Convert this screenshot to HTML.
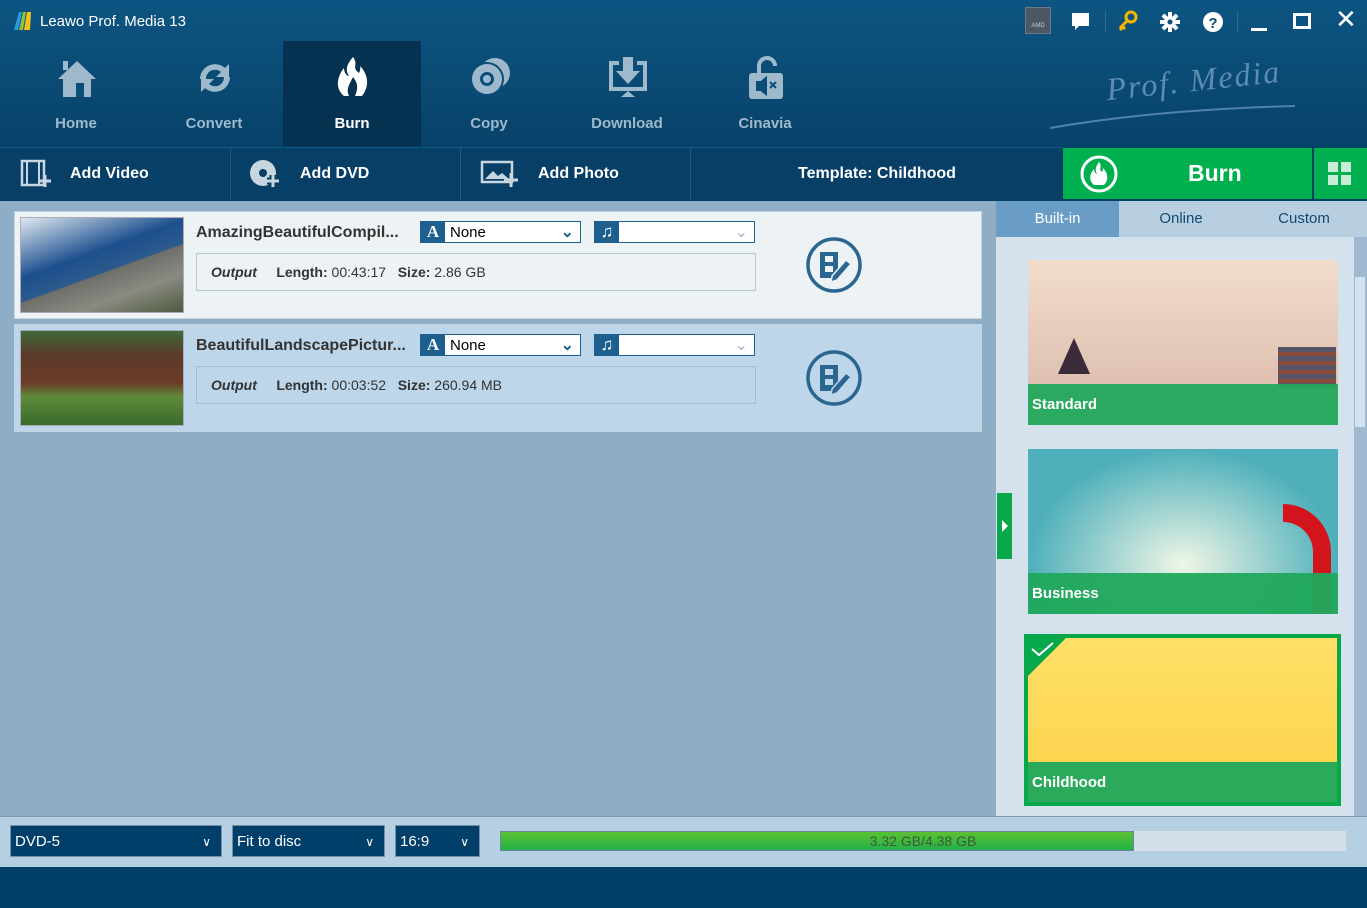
<!DOCTYPE html>
<html><head><meta charset="utf-8"><style>
*{margin:0;padding:0;box-sizing:border-box}
body{width:1367px;height:908px;overflow:hidden;font-family:"Liberation Sans",sans-serif;background:#003f66;position:relative}
.abs{position:absolute}
.hdr{left:0;top:0;width:1367px;height:147px;background:linear-gradient(#0d5582,#074269)}
.nav{top:41px;width:138px;height:106px;text-align:center;color:#9fb9cc;font-weight:bold;font-size:15px}
.nav .lbl{position:absolute;left:0;right:0;top:74px}
.nav svg{position:absolute;left:47px;top:14px}
.tb{top:147px;left:0;width:1063px;height:53px;background:#073f66;border-top:1px solid #0f5a88}
.tbi{top:147px;height:53px;color:#fff;font-weight:bold;font-size:16px;line-height:53px;border-right:1px solid #1a5a84}
.main{left:0;top:201px;width:996px;height:615px;background:#8fadc5}
.row{left:14px;width:968px;height:108px;border:1px solid #c4d5e2}
.thumb{left:5px;top:5px;width:164px;height:96px;border:1px solid #aab;}
.name{left:181px;top:12px;font-weight:bold;font-size:16px;color:#333}
.sel{top:9px;height:22px;background:#fff;border:1px solid #1d6090}
.sel .ic{position:absolute;left:0;top:0;width:24px;height:20px;background:#1d6090;color:#fff;font-family:"Liberation Serif",serif;font-weight:bold;font-size:17px;text-align:center;line-height:20px}
.out{left:181px;top:41px;width:560px;height:38px;border:1px solid #b5c6d4;font-size:14px;color:#333;line-height:36px;padding-left:14px}
.right{left:996px;top:201px;width:371px;height:615px;background:#d3e2ed}
.tab{top:201px;height:36px;line-height:36px;font-size:15px;color:#154a70;text-align:center}
.card{left:1028px;width:310px;overflow:hidden}
.card .band{position:absolute;left:0;right:0;bottom:0;height:40px;background:rgba(33,168,92,.95);color:#fff;font-weight:bold;font-size:15px;line-height:42px;padding-left:4px}
.bot{left:0;top:816px;width:1367px;height:51px;background:#b5cfe3;border-top:1px solid #7a9ab3}
.dd{top:825px;height:32px;background:#003f69;border:1px solid #7890a4;color:#fff;font-size:15px;line-height:32px;padding-left:4px}
.dd span{position:absolute;right:10px;top:0;font-size:12px}
</style></head><body>
<div class="abs hdr"></div>
<svg class="abs" style="left:12px;top:10px" width="22" height="22"><polygon points="2,20 7,2 10,2 6,20" fill="#2a9be0"/><polygon points="7,20 11,2 14,2 11,20" fill="#8bc43f"/><polygon points="12,20 15,2 19,2 18,20" fill="#f5c01a"/></svg>
<div class="abs" style="left:40px;top:13px;color:#fff;font-size:15px">Leawo Prof. Media 13</div>
<div class="abs" style="left:1025px;top:7px;width:26px;height:27px;background:#4a5865;border:1px solid #6d7b88;color:#ccc;font-size:6px;text-align:center;padding-top:15px">AMD</div>
<svg class="abs" style="left:1070px;top:11px" width="22" height="22"><path d="M2 2h17v13H9l-4 4v-4H2z" fill="#fff"/></svg>
<div class="abs" style="left:1105px;top:10px;width:1px;height:22px;background:#2c6a95"></div>
<svg class="abs" style="left:1117px;top:10px" width="22" height="22"><circle cx="14" cy="7" r="5" fill="none" stroke="#f5b800" stroke-width="3"/><path d="M10 11l-7 7M5 16l3 3M3 18l2 2" stroke="#f5b800" stroke-width="3"/></svg>
<svg class="abs" style="left:1159px;top:11px" width="22" height="22"><g fill="#fff"><circle cx="11" cy="11" r="6"/><rect x="9" y="1" width="4" height="20"/><rect x="1" y="9" width="20" height="4"/><rect x="9" y="1" width="4" height="20" transform="rotate(45 11 11)"/><rect x="9" y="1" width="4" height="20" transform="rotate(-45 11 11)"/></g><circle cx="11" cy="11" r="2.5" fill="#0b4d79"/></svg>
<svg class="abs" style="left:1202px;top:11px" width="22" height="22"><circle cx="11" cy="11" r="10" fill="#fff"/><text x="11" y="17" text-anchor="middle" font-size="15" font-weight="bold" fill="#0b4d79" font-family="Liberation Sans">?</text></svg>
<div class="abs" style="left:1237px;top:10px;width:1px;height:22px;background:#2c6a95"></div>
<div class="abs" style="left:1251px;top:28px;width:16px;height:3px;background:#fff"></div>
<div class="abs" style="left:1293px;top:13px;width:18px;height:16px;border:3px solid #fff"></div>
<div class="abs" style="left:1335px;top:4px;color:#fff;font-size:26px">✕</div>
<div class="abs nav" style="left:7px"><svg width="46" height="46"><path d="M4 24L23 6l19 18h-5v18H9V24z" fill="#9fb9cc"/><rect x="22" y="28" width="8" height="14" fill="#0b4d79"/><rect x="9" y="6" width="5" height="9" fill="#9fb9cc"/></svg><div class="lbl">Home</div></div>
<div class="abs nav" style="left:145px"><svg width="46" height="46"><path d="M8 24a15 15 0 0 1 25-11l4-4v13H24l5-5a9 9 0 0 0-15 7z M38 22a15 15 0 0 1-25 11l-4 4V24h13l-5 5a9 9 0 0 0 15-7z" fill="#9fb9cc"/></svg><div class="lbl">Convert</div></div>
<div class="abs nav" style="left:283px;background:#063252;color:#fff"><svg width="46" height="46"><path d="M23 2c6 8-2 10 6 16 2-4 1-7 1-7 8 8 10 20 2 30H14C4 33 8 20 14 13c0 5 3 8 5 8-5-8 0-14 4-19z" fill="#fff"/><path d="M23 22c4 5 6 10 2 19h-6c-3-7 0-11 4-19z" fill="#063252"/></svg><div class="lbl">Burn</div></div>
<div class="abs nav" style="left:420px"><svg width="46" height="46"><circle cx="28" cy="18" r="15" fill="#9fb9cc"/><circle cx="20" cy="24" r="17" fill="#0b4d79"/><circle cx="20" cy="24" r="15" fill="#9fb9cc"/><circle cx="20" cy="24" r="7" fill="#0b4d79"/><circle cx="20" cy="24" r="4" fill="#9fb9cc"/></svg><div class="lbl">Copy</div></div>
<div class="abs nav" style="left:558px"><svg width="46" height="46"><path d="M4 6h10v4H8v22h30V10h-6V6h10v30H4z" fill="#9fb9cc"/><path d="M18 2h10v14h7L23 29 11 16h7z" fill="#9fb9cc"/><path d="M16 42l7-6 7 6z" fill="#9fb9cc"/></svg><div class="lbl">Download</div></div>
<div class="abs nav" style="left:696px"><svg width="46" height="46"><path d="M16 18v-7a8 8 0 0 1 16 0" fill="none" stroke="#9fb9cc" stroke-width="4"/><rect x="6" y="18" width="34" height="26" rx="3" fill="#9fb9cc"/><path d="M14 27h4l5-4v16l-5-4h-4z M27 27l6 6M33 27l-6 6" fill="#0b4d79" stroke="#0b4d79" stroke-width="2"/></svg><div class="lbl">Cinavia</div></div>
<div class="abs" style="left:1106px;top:62px;color:#5d8cb3;font-family:'Liberation Serif',serif;font-style:italic;font-size:32px;letter-spacing:2px;transform:rotate(-6deg)">Prof. Media</div>
<svg class="abs" style="left:1050px;top:104px" width="250" height="28"><path d="M0 24C80 10 170 4 245 2" stroke="#4f82ad" stroke-width="2" fill="none"/></svg>
<div class="abs tb"></div>
<div class="abs tbi" style="left:0;width:231px"><svg class="abs" style="left:20px;top:12px" width="32" height="30"><rect x="2" y="2" width="22" height="24" fill="none" stroke="#c8d6e0" stroke-width="2.5"/><path d="M7 2v24M19 2v24" stroke="#c8d6e0" stroke-width="2"/><path d="M25 16v12M19 22h12" stroke="#c8d6e0" stroke-width="3"/></svg><span style="position:absolute;left:70px">Add Video</span></div>
<div class="abs tbi" style="left:231px;width:230px"><svg class="abs" style="left:18px;top:12px" width="34" height="30"><circle cx="14" cy="14" r="13" fill="#c8d6e0"/><circle cx="14" cy="14" r="4" fill="#073f66"/><path d="M24 16v12M18 22h12" stroke="#073f66" stroke-width="7"/><path d="M24 16v12M18 22h12" stroke="#c8d6e0" stroke-width="3"/></svg><span style="position:absolute;left:69px">Add DVD</span></div>
<div class="abs tbi" style="left:461px;width:230px"><svg class="abs" style="left:19px;top:12px" width="40" height="30"><rect x="2" y="3" width="30" height="20" fill="none" stroke="#c8d6e0" stroke-width="2.5"/><path d="M5 20l8-8 5 5 4-3 7 6z" fill="#c8d6e0"/><path d="M31 14v14M24 21h14" stroke="#c8d6e0" stroke-width="3"/></svg><span style="position:absolute;left:77px">Add Photo</span></div>
<div class="abs tbi" style="left:691px;width:372px;text-align:center;border:none">Template: Childhood</div>
<div class="abs" style="left:1063px;top:148px;width:249px;height:51px;background:#00b04f"><svg class="abs" style="left:16px;top:6px" width="40" height="40"><circle cx="20" cy="20" r="17" fill="none" stroke="#fff" stroke-width="3"/><path d="M20 8c4 5-1 7 3 10 1-2 1-4 1-4 5 5 6 12 1 17h-10c-6-5-4-12 0-16 0 3 2 5 3 5-3-5 0-9 2-12z" fill="#fff"/></svg><div class="abs" style="left:125px;top:12px;color:#fff;font-weight:bold;font-size:23px">Burn</div></div>
<div class="abs" style="left:1314px;top:148px;width:53px;height:51px;background:#00b04f"><div class="abs" style="left:14px;top:14px;width:10px;height:10px;background:#c8ecd5"></div><div class="abs" style="left:27px;top:14px;width:10px;height:10px;background:#c8ecd5"></div><div class="abs" style="left:14px;top:27px;width:10px;height:10px;background:#c8ecd5"></div><div class="abs" style="left:27px;top:27px;width:10px;height:10px;background:#c8ecd5"></div></div>
<div class="abs main"></div>
<div class="abs row" style="top:211px;background:#edf2f5">
 <div class="abs thumb" style="background:linear-gradient(160deg,#dfe8f0 0%,#7e9cc0 20%,#1c4f8e 40%,#2c5a8c 55%,#6e6f6a 56%,#8a8a82 75%,#4d5a3c 100%)"></div>
 <div class="abs name">AmazingBeautifulCompil...</div>
 <div class="abs sel" style="left:405px;width:161px"><div class="ic">A</div><span style="position:absolute;left:29px;top:2px;font-size:15px">None</span><span style="position:absolute;right:6px;top:0;color:#1d6090;font-weight:bold">⌄</span></div>
 <div class="abs sel" style="left:579px;width:161px"><div class="ic">♫</div><span style="position:absolute;right:6px;top:0;color:#aac">⌄</span></div>
 <div class="abs out"><i style="font-weight:bold">Output</i> &nbsp;&nbsp;&nbsp;&nbsp;<b>Length:</b> 00:43:17 &nbsp;&nbsp;<b>Size:</b> 2.86 GB</div>
 <svg class="abs" style="left:790px;top:24px" width="58" height="58"><circle cx="29" cy="29" r="26" fill="none" stroke="#2a668f" stroke-width="3.5"/><rect x="15" y="16" width="18" height="26" fill="#2a668f"/><rect x="20" y="20" width="8" height="6" fill="#edf2f5"/><rect x="20" y="30" width="8" height="6" fill="#edf2f5"/><path d="M27 40l14-16 5 4-14 16-6 2z" fill="#2a668f" stroke="#edf2f5" stroke-width="1.5"/></svg>
</div>
<div class="abs row" style="top:324px;background:#bdd6ea">
 <div class="abs thumb" style="background:linear-gradient(180deg,#3d6a3a 0%,#5b3a2a 25%,#6b3b28 55%,#5f8a3a 70%,#3a6b2c 100%)"></div>
 <div class="abs name">BeautifulLandscapePictur...</div>
 <div class="abs sel" style="left:405px;width:161px"><div class="ic">A</div><span style="position:absolute;left:29px;top:2px;font-size:15px">None</span><span style="position:absolute;right:6px;top:0;color:#1d6090;font-weight:bold">⌄</span></div>
 <div class="abs sel" style="left:579px;width:161px"><div class="ic">♫</div><span style="position:absolute;right:6px;top:0;color:#aac">⌄</span></div>
 <div class="abs out" style="border-color:#a3bccf"><i style="font-weight:bold">Output</i> &nbsp;&nbsp;&nbsp;&nbsp;<b>Length:</b> 00:03:52 &nbsp;&nbsp;<b>Size:</b> 260.94 MB</div>
 <svg class="abs" style="left:790px;top:24px" width="58" height="58"><circle cx="29" cy="29" r="26" fill="none" stroke="#2a668f" stroke-width="3.5"/><rect x="15" y="16" width="18" height="26" fill="#2a668f"/><rect x="20" y="20" width="8" height="6" fill="#bdd6ea"/><rect x="20" y="30" width="8" height="6" fill="#bdd6ea"/><path d="M27 40l14-16 5 4-14 16-6 2z" fill="#2a668f" stroke="#bdd6ea" stroke-width="1.5"/></svg>
</div>
<div class="abs right"></div>
<div class="abs" style="left:996px;top:201px;width:371px;height:36px;background:#b8cfe2"></div>
<div class="abs tab" style="left:996px;width:123px;background:#6a9dc6;color:#fff">Built-in</div>
<div class="abs tab" style="left:1119px;width:124px">Online</div>
<div class="abs tab" style="left:1243px;width:122px">Custom</div>
<div class="abs" style="left:1354px;top:237px;width:13px;height:579px;background:#9fbad0"></div>
<div class="abs" style="left:1355px;top:277px;width:10px;height:150px;background:#d3e2ed"></div>
<div class="abs" style="left:997px;top:493px;width:15px;height:66px;background:#06a84a"><div class="abs" style="left:5px;top:27px;width:0;height:0;border-left:6px solid #fff;border-top:6px solid transparent;border-bottom:6px solid transparent"></div></div>
<div class="abs card" style="top:260px;height:165px;background:linear-gradient(#f2dccb,#d8b8a8)"><div class="abs" style="left:250px;top:87px;width:58px;height:40px;background:repeating-linear-gradient(#556 0 5px,#8a4a3a 5px 9px)"></div><div class="abs" style="left:30px;top:78px;width:32px;height:40px;background:#3a2a3a;clip-path:polygon(50% 0,100% 90%,0 90%)"></div><div class="band" style="height:41px">Standard</div></div>
<div class="abs card" style="top:449px;height:165px;background:radial-gradient(ellipse at 50% 70%,#f0f6e6,#4fb0bb 70%)"><div class="abs" style="left:255px;top:55px;width:48px;height:110px;border:18px solid #d3141c;border-left:none;border-bottom:none;border-radius:0 60px 0 0"></div><div class="band" style="height:41px">Business</div></div>
<div class="abs" style="left:1024px;top:634px;width:317px;height:172px;background:#06a84a"></div>
<div class="abs card" style="top:638px;left:1028px;width:309px;height:164px;background:linear-gradient(#ffe066,#fcd14a)"><div class="band" style="height:40px">Childhood</div></div>
<div class="abs" style="left:1024px;top:634px;width:0;height:0;border-top:46px solid #06a84a;border-right:46px solid transparent"></div>
<svg class="abs" style="left:1030px;top:640px" width="26" height="18"><path d="M2 9l7 6 14-12" stroke="#fff" stroke-width="2" fill="none"/></svg>
<div class="abs bot"></div>
<div class="abs dd" style="left:10px;width:212px">DVD-5<span>∨</span></div>
<div class="abs dd" style="left:232px;width:153px">Fit to disc<span>∨</span></div>
<div class="abs dd" style="left:395px;width:85px">16:9<span>∨</span></div>
<div class="abs" style="left:500px;top:831px;width:846px;height:20px;background:#d5dfe7"></div>
<div class="abs" style="left:500px;top:831px;width:634px;height:20px;background:linear-gradient(#5cc030,#22b24a);border:1px solid #6a86a0"></div>
<div class="abs" style="left:500px;top:833px;width:846px;text-align:center;font-size:14px;color:#3a5a3a">3.32 GB/4.38 GB</div>
</body></html>
